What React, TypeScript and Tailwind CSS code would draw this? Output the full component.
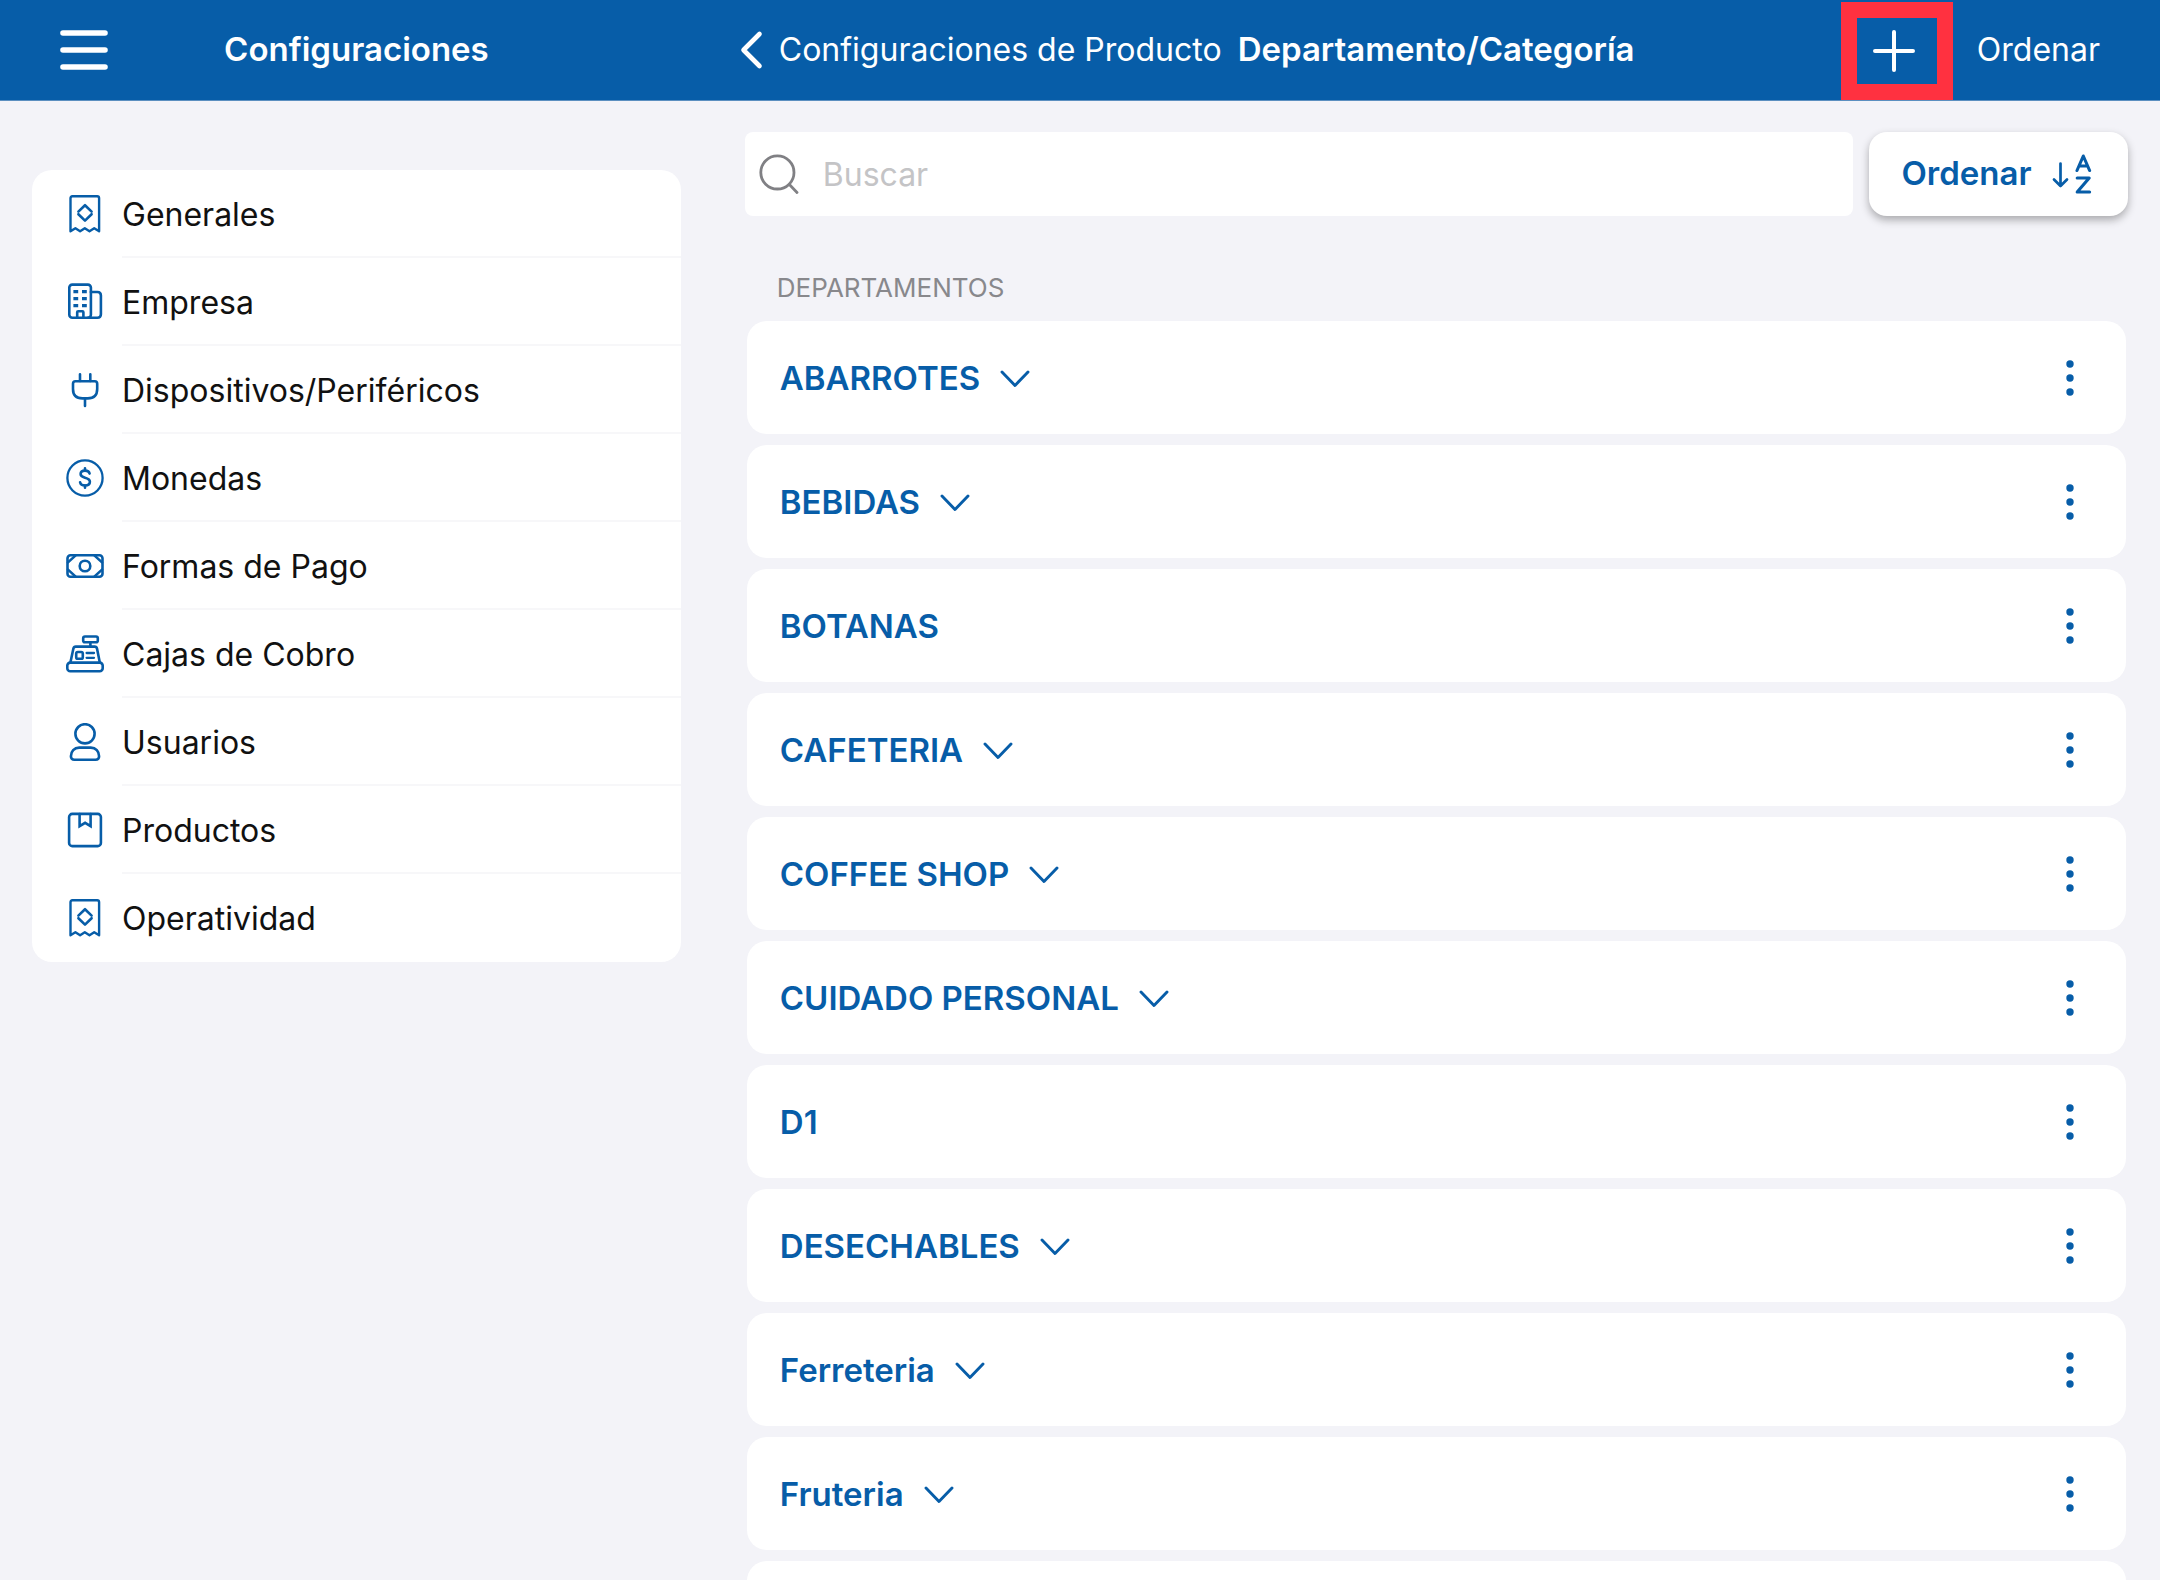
import { useState } from "react";
import type { ReactNode } from "react";

type IconProps = { children: ReactNode };

const MenuIcon = ({ children }: IconProps) => (
  <svg
    className="w-[38px] h-[38px] shrink-0 text-[#075da8]"
    viewBox="0 0 38 38"
    fill="none"
    stroke="currentColor"
    strokeWidth="2.6"
    strokeLinecap="round"
    strokeLinejoin="round"
    aria-hidden="true"
  >
    {children}
  </svg>
);

const ReceiptIcon = () => (
  <MenuIcon>
    <path d="M4.5 36.3V3.2Q4.5 1.3 6.4 1.3H31.2Q33.1 1.3 33.1 3.2V36.3L28.2 33.2L23.5 36.2L18.8 33.2L14.1 36.2L9.4 33.2Z" strokeWidth="2.4" />
    <path d="M12.4 16.6L19 10.2L25.6 16.6M12.4 19.2L19 25.6L25.6 19.2" />
  </MenuIcon>
);

const BuildingIcon = () => (
  <MenuIcon>
    <rect x="3.3" y="1.6" width="21.6" height="33.2" rx="3" />
    <path d="M24.9 9H31.4Q34.9 9 34.9 12.5V31.3Q34.9 34.8 31.4 34.8H22" />
    <path d="M11.2 34.8V29.2Q11.2 28.2 12.2 28.2H16.4Q17.4 28.2 17.4 29.2V34.8" />
    <path
      d="M7.4 8.6H12.2M16 8.6H20.8M7.4 15.6H12.2M16 15.6H20.8M7.4 22.6H12.2M16 22.6H20.8"
      strokeWidth="3.4"
      strokeLinecap="butt"
    />
  </MenuIcon>
);

const PlugIcon = () => (
  <MenuIcon>
    <path d="M14 3.2V10M24.3 3.2V10M19 27.8V35" />
    <path d="M9.4 10.3H28.8Q31.2 10.3 31.2 12.8V18Q31.2 27.4 21.8 27.4H16.4Q7 27.4 7 18V12.8Q7 10.3 9.4 10.3Z" />
  </MenuIcon>
);

const CoinIcon = () => (
  <MenuIcon>
    <circle cx="19" cy="19" r="17.6" strokeWidth="2.3" />
    <path d="M19 9.2V11.6M19 26.5V28.8" />
    <path d="M23.6 14.6C23.2 12.6 21.4 11.6 19 11.6C16.4 11.6 14.6 12.9 14.6 15C14.6 17 16 17.9 19 18.7C22.2 19.5 23.9 20.5 23.9 22.8C23.9 25.1 22 26.5 19.1 26.5C16.3 26.5 14.5 25.2 14.1 23.2" />
  </MenuIcon>
);

const BanknoteIcon = () => (
  <MenuIcon>
    <rect x="1.5" y="8.2" width="35" height="21.6" rx="3" />
    <circle cx="19" cy="19" r="5.3" />
    <path d="M9.4 8.6L2 15.4M28.6 8.6L36 15.4M9.4 29.4L2 22.6M28.6 29.4L36 22.6" />
  </MenuIcon>
);

const RegisterIcon = () => (
  <MenuIcon>
    <rect x="17.2" y="1.5" width="14.6" height="5.8" rx="1.8" />
    <path d="M24.4 7.4V11.4" />
    <path d="M4.4 27.6L7.4 13.6Q7.8 11.6 9.8 11.6H28.6Q30.6 11.6 31 13.6L33.8 27.6" />
    <rect x="1.3" y="27.6" width="35.4" height="8.6" rx="3" />
    <rect x="10.2" y="17" width="6.6" height="6.8" rx="1.6" />
    <path d="M20.6 18H28M20.6 22.8H28" strokeWidth="2.3" />
  </MenuIcon>
);

const UserIcon = () => (
  <MenuIcon>
    <circle cx="19" cy="10.8" r="9.6" />
    <path d="M13.2 24.6H24.8C29.8 24.6 33.1 28.6 33.1 33.2Q33.1 36.7 29.6 36.7H8.4Q4.9 36.7 4.9 33.2C4.9 28.6 8.2 24.6 13.2 24.6Z" />
  </MenuIcon>
);

const BoxIcon = () => (
  <MenuIcon>
    <rect x="3.1" y="2.9" width="31.8" height="32.2" rx="3.2" />
    <path d="M13.6 3V15.2L19.1 11.8L24.6 15.2V3" strokeLinejoin="miter" />
  </MenuIcon>
);

const menuItems = [
  { label: "Generales", icon: <ReceiptIcon /> },
  { label: "Empresa", icon: <BuildingIcon /> },
  { label: "Dispositivos/Periféricos", icon: <PlugIcon /> },
  { label: "Monedas", icon: <CoinIcon /> },
  { label: "Formas de Pago", icon: <BanknoteIcon /> },
  { label: "Cajas de Cobro", icon: <RegisterIcon /> },
  { label: "Usuarios", icon: <UserIcon /> },
  { label: "Productos", icon: <BoxIcon /> },
  { label: "Operatividad", icon: <ReceiptIcon /> },
];

const departments = [
  { name: "ABARROTES", expandable: true },
  { name: "BEBIDAS", expandable: true },
  { name: "BOTANAS", expandable: false },
  { name: "CAFETERIA", expandable: true },
  { name: "COFFEE SHOP", expandable: true },
  { name: "CUIDADO PERSONAL", expandable: true },
  { name: "D1", expandable: false },
  { name: "DESECHABLES", expandable: true },
  { name: "Ferreteria", expandable: true },
  { name: "Fruteria", expandable: true },
];

const Header = () => (
  <header className="flex h-[101px] shrink-0 bg-[#075da8] border-b border-[#5b8fc0] text-white">
    <div className="relative w-[33%] shrink-0 flex items-center justify-center">
      <button className="absolute left-[60px]" aria-label="Menú">
        <svg className="w-12 h-10" viewBox="0 0 48 40" fill="none" stroke="currentColor" strokeWidth="5.6" strokeLinecap="round">
          <path d="M3 3H45M3 20H45M3 37H45" />
        </svg>
      </button>
      <h1 className="text-[33px] font-semibold">Configuraciones</h1>
    </div>
    <div className="flex-1 flex items-center justify-between pl-[26px] pr-[60px]">
      <nav className="flex items-center gap-4 whitespace-nowrap">
        <a href="#producto" className="flex items-center gap-4 text-[32px]">
          <svg className="w-6 h-10" viewBox="0 0 24 40" fill="none" stroke="currentColor" strokeWidth="4.6" strokeLinecap="round" strokeLinejoin="round">
            <path d="M20.5 4L4.5 20L20.5 36" />
          </svg>
          Configuraciones de Producto
        </a>
        <span className="text-[33px] font-semibold">Departamento/Categoría</span>
      </nav>
      <div className="flex items-center gap-6">
        <button className="w-28 h-[98px] mt-0.5 pr-1.5 border-[16px] border-[#ff3140] flex items-center justify-center" aria-label="Agregar">
          <svg className="w-[42px] h-[42px] shrink-0" viewBox="0 0 42 42" fill="none" stroke="currentColor" strokeWidth="4" strokeLinecap="round">
            <path d="M21 2V40M2 21H40" />
          </svg>
        </button>
        <button className="text-[32px]">Ordenar</button>
      </div>
    </div>
  </header>
);

const Sidebar = () => (
  <aside className="w-[33%] shrink-0 px-8 pt-[69px]">
    <ul className="bg-white rounded-[20px] overflow-hidden">
      {menuItems.map((item, i) => (
        <li key={item.label}>
          <a href="#" className="flex items-center h-[88px] pl-[34px] gap-[18px]">
            {item.icon}
            <span
              className={`flex-1 h-full flex items-center pt-1 text-[32px] text-[#111111] border-b-2 ${
                i < menuItems.length - 1 ? "border-[#f7f7f9]" : "border-transparent"
              }`}
            >
              {item.label}
            </span>
          </a>
        </li>
      ))}
    </ul>
  </aside>
);

const App = () => {
  const [search, setSearch] = useState("");

  return (
    <div className="h-screen flex flex-col overflow-hidden bg-[#f3f3f8] font-[Inter,sans-serif]">
      <Header />
      <div className="flex flex-1 min-h-0">
        <Sidebar />
        <main className="flex-1 px-8 pt-[31px] overflow-hidden">
          <div className="flex gap-4">
            <label className="flex-1 h-[84px] flex items-center gap-6 pl-3.5 bg-white rounded-lg">
              <svg className="w-10 h-10 shrink-0 text-[#808084]" viewBox="0 0 40 40" fill="none" stroke="currentColor" strokeWidth="2.8" strokeLinecap="round">
                <circle cx="18.4" cy="18.4" r="16.6" />
                <path d="M30.4 30.6L38 38.4" />
              </svg>
              <input
                type="text"
                value={search}
                onChange={(e) => setSearch(e.target.value)}
                placeholder="Buscar"
                aria-label="Buscar"
                className="flex-1 h-full text-[32px] outline-none placeholder:text-[#c4c4c6]"
              />
            </label>
            <button className="w-[259px] h-[84px] flex items-center justify-center gap-5 pr-1 bg-white rounded-[18px] shadow-[0_4px_8px_rgba(0,0,0,0.3)] text-[33px] font-semibold text-[#075da8]">
              Ordenar
              <svg className="w-10 h-10 shrink-0" viewBox="0 0 40 40" fill="none" stroke="currentColor" strokeWidth="2.7" strokeLinecap="round" strokeLinejoin="round">
                <path d="M8.5 9.5V32M2 25.5L8.5 32L15 25.5" />
                <path d="M25 16.5L31.3 2L37.6 16.5M27.2 12H35.4" strokeWidth="3.1" />
                <path d="M25.2 24H37.2L25.2 38H37.6" strokeWidth="3.1" />
              </svg>
            </button>
          </div>

          <h2 className="mt-14 ml-8 text-[26px] leading-8 text-[#88888c]">DEPARTAMENTOS</h2>

          <ul className="mt-[17px] mx-0.5 flex flex-col gap-[11px]">
            {departments.map((dep) => (
              <li key={dep.name} className="h-[113px] shrink-0 flex items-center justify-between pl-[33px] pr-9 bg-white rounded-[20px] text-[#075da8]">
                <button className="flex items-center gap-5 pt-0.5 text-[33px] font-semibold">
                  {dep.name}
                  {dep.expandable && (
                    <svg className="w-[30px] h-[18px]" viewBox="0 0 30 18" fill="none" stroke="currentColor" strokeWidth="2.9" strokeLinecap="round" strokeLinejoin="round">
                      <path d="M2 2L15 15.5L28 2" />
                    </svg>
                  )}
                </button>
                <button className="w-10 h-12 flex items-center justify-center" aria-label={`Opciones de ${dep.name}`}>
                  <svg className="w-2 h-9" viewBox="0 0 8 36" fill="currentColor">
                    <circle cx="4" cy="4" r="3.7" />
                    <circle cx="4" cy="18" r="3.7" />
                    <circle cx="4" cy="32" r="3.7" />
                  </svg>
                </button>
              </li>
            ))}
            <li className="h-[113px] shrink-0 bg-white rounded-[20px]" />
          </ul>
        </main>
      </div>
    </div>
  );
};

export default App;
